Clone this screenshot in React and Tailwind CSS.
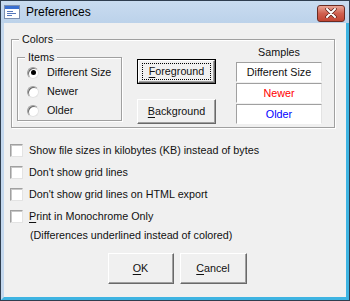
import React from 'react';

const font = { fontFamily: '"Liberation Sans", Arial, sans-serif' };

function Underlined({ first, rest }) {
  return (
    <span>
      <span className="underline underline-offset-2">{first}</span>
      {rest}
    </span>
  );
}

function GroupBox({ label, className, children }) {
  return (
    <div
      className={`relative border border-[#a0a0a0] shadow-[inset_1px_1px_0_#fff,1px_1px_0_#fff] ${className}`}
    >
      <span className="absolute -top-[8px] left-[7px] bg-[#f0f0f0] px-[3px] leading-[14px]">{label}</span>
      {children}
    </div>
  );
}

function Radio({ checked, label }) {
  return (
    <div className="flex h-[19px] items-center gap-[8px]">
      <span className="flex h-[12px] w-[12px] items-center justify-center rounded-full border border-t-[#a0a0a0] border-l-[#a0a0a0] border-r-[#e3e3e3] border-b-[#e3e3e3] bg-white shadow-[inset_1px_1px_0_#696969]">
        {checked && <span className="h-[5px] w-[5px] rounded-full bg-black" />}
      </span>
      <span>{label}</span>
    </div>
  );
}

function Checkbox({ children }) {
  return (
    <div className="flex h-[22px] items-center gap-[6px] pl-[6px]">
      <span className="h-[13px] w-[13px] border border-t-[#a0a0a0] border-l-[#a0a0a0] border-r-[#e3e3e3] border-b-[#e3e3e3] bg-white shadow-[inset_1px_1px_0_#c8c8c8]" />
      <span>{children}</span>
    </div>
  );
}

function ClassicButton({ children, isDefault, className }) {
  return (
    <button
      className={`flex items-center justify-center bg-[#f0f0f0] ${
        isDefault ? 'border border-black' : ''
      } ${className}`}
    >
      <span className="flex h-full w-full items-center justify-center border border-t-white border-l-white border-r-[#696969] border-b-[#696969] shadow-[inset_-1px_-1px_0_#a0a0a0]">
        {isDefault ? (
          <span className="flex h-[calc(100%-4px)] w-[calc(100%-6px)] items-center justify-center border border-dotted border-black">
            {children}
          </span>
        ) : (
          children
        )}
      </span>
    </button>
  );
}

export default function App() {
  return (
    <div className="h-[301px] w-[350px] overflow-hidden text-[10.75px] text-[#111]" style={font}>
      <div className="flex h-full w-full flex-col border border-[#2f3e4f]">
        {/* Title bar */}
        <div className="flex h-[22px] shrink-0 items-center bg-gradient-to-b from-[#c9dcf0] to-[#bcd2ea] pl-[3px] pr-[4px]">
          <svg width="16" height="16" viewBox="0 0 16 16" className="shrink-0">
            <rect x="0.5" y="1.5" width="15" height="13" fill="#fff" stroke="#7b8fb0" />
            <rect x="1" y="2" width="14" height="3" fill="#3a6fd0" />
            <rect x="3" y="7" width="6" height="1" fill="#5577bb" />
            <rect x="3" y="9" width="9" height="1" fill="#5577bb" />
            <rect x="3" y="11" width="5" height="1" fill="#5577bb" />
          </svg>
          <span className="ml-[6px] text-[12px] leading-none text-black">Preferences</span>
          <div className="ml-auto mt-[2px] flex h-[17px] w-[28px] items-center justify-center rounded-[3px] border border-[#6a2b22] bg-gradient-to-b from-[#e9a596] via-[#d0604f] to-[#c24432]">
            <svg width="12" height="10" viewBox="0 0 12 10">
              <path d="M2 1 L10 9 M10 1 L2 9" stroke="#5a1e16" strokeWidth="3.4" strokeLinecap="round" />
              <path d="M2 1 L10 9 M10 1 L2 9" stroke="#fff" strokeWidth="2" strokeLinecap="round" />
            </svg>
          </div>
        </div>

        {/* Body */}
        <div className="flex flex-1 flex-col border-b-[3px] border-l-[3px] border-r-[3px] border-b-[#3eb4e2] border-l-[#c4d8ee] border-r-[#3eb4e2] bg-[#f0f0f0]">
          <GroupBox label="Colors" className="ml-[7px] mt-[16px] flex h-[89px] w-[324px] items-start">
            <GroupBox label="Items" className="ml-[5px] mt-[17px] h-[64px] w-[105px] shrink-0 pl-[9px] pt-[5px]">
              <Radio checked label="Different Size" />
              <Radio label="Newer" />
              <Radio label="Older" />
            </GroupBox>

            <div className="ml-[15px] mt-[19px] flex w-[79px] shrink-0 flex-col gap-[15px]">
              <ClassicButton isDefault className="h-[25px] w-[79px]">
                <Underlined first="F" rest="oreground" />
              </ClassicButton>
              <ClassicButton className="h-[25px] w-[79px]">
                <Underlined first="B" rest="ackground" />
              </ClassicButton>
            </div>

            <div className="ml-[20px] mt-[5px] flex w-[86px] shrink-0 flex-col">
              <div className="h-[17px] text-center leading-[14px]">Samples</div>
              <div className="flex flex-col gap-[1px]">
                <div className="flex h-[20px] items-center justify-center border border-t-[#a0a0a0] border-l-[#a0a0a0] border-r-[#e3e3e3] border-b-white bg-white">
                  Different Size
                </div>
                <div className="flex h-[20px] items-center justify-center border border-t-[#a0a0a0] border-l-[#a0a0a0] border-r-[#e3e3e3] border-b-white bg-white text-[#ff0000]">
                  Newer
                </div>
                <div className="flex h-[20px] items-center justify-center border border-t-[#a0a0a0] border-l-[#a0a0a0] border-r-[#e3e3e3] border-b-white bg-white text-[#0000ff]">
                  Older
                </div>
              </div>
            </div>
          </GroupBox>

          <div className="mt-[11px] flex flex-col">
            <Checkbox>Show file sizes in kilobytes (KB) instead of bytes</Checkbox>
            <Checkbox>Don't show grid lines</Checkbox>
            <Checkbox>Don't show grid lines on HTML export</Checkbox>
            <Checkbox>
              <Underlined first="P" rest="rint in Monochrome Only" />
            </Checkbox>
            <div className="flex h-[16px] items-center pl-[26px]">(Differences underlined instead of colored)</div>
          </div>

          <div className="mt-[10px] flex justify-center gap-[6px] pl-[4px]">
            <ClassicButton className="h-[31px] w-[66px]">
              <Underlined first="O" rest="K" />
            </ClassicButton>
            <ClassicButton className="h-[31px] w-[67px]">
              <Underlined first="C" rest="ancel" />
            </ClassicButton>
          </div>
        </div>
      </div>
    </div>
  );
}
